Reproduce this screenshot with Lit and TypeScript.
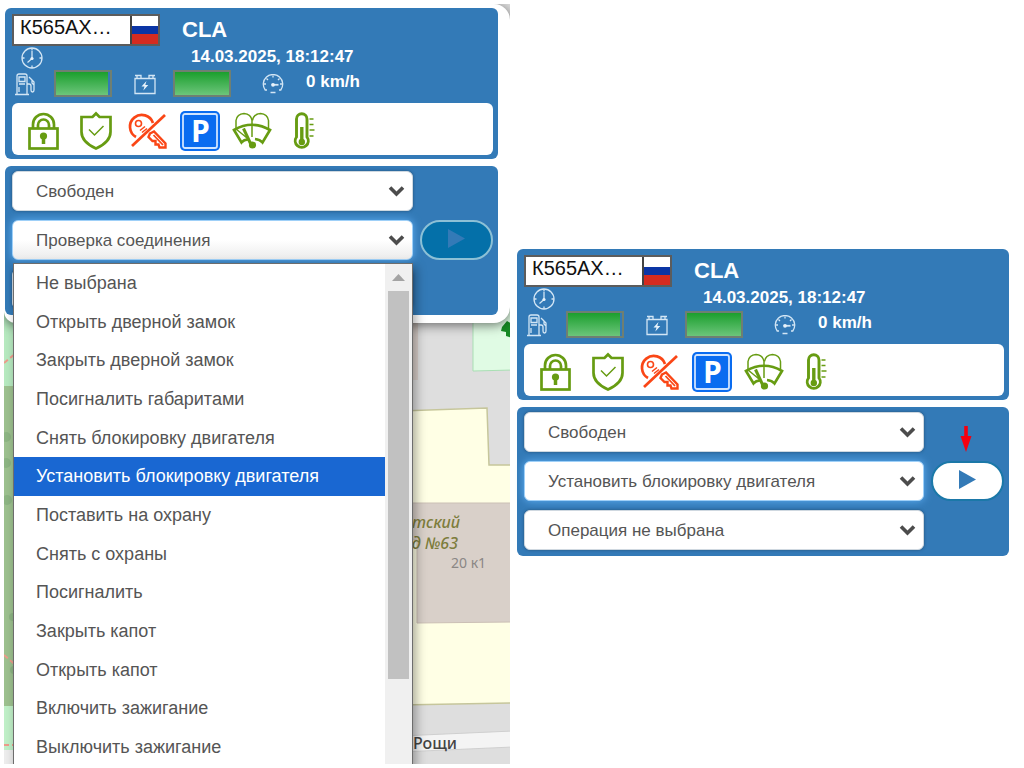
import { LitElement, html, css, svg } from "lit";
import { customElement, property } from "lit/decorators.js";
import { classMap } from "lit/directives/class-map.js";
import { styleMap } from "lit/directives/style-map.js";

const COMMANDS = [
  "Не выбрана",
  "Открыть дверной замок",
  "Закрыть дверной замок",
  "Посигналить габаритами",
  "Снять блокировку двигателя",
  "Установить блокировку двигателя",
  "Поставить на охрану",
  "Снять с охраны",
  "Посигналить",
  "Закрыть капот",
  "Открыть капот",
  "Включить зажигание",
  "Выключить зажигание",
];

const clockIcon = html`<svg class="thin" width="22" height="22" viewBox="0 0 22 22" aria-hidden="true">
  <circle cx="11" cy="11" r="10" />
  <path d="M11 4v7.5L6.5 15.5M11 1v2.5M11 18.500v2.500M1 11h2.500M18.500 11h2.500" />
  <circle class="dot" cx="11" cy="11.500" r="1.600" />
</svg>`;

const pumpIcon = html`<svg class="thin" width="26" height="24" viewBox="0 0 26 24" aria-hidden="true">
  <path d="M3 22.500h14M5 22.500V4q0-2 2-2h6q2 0 2 2v18.500M7 5h6v4.500H7zM7 12h6M7 15v5" />
  <path d="M17 5l3 3v3l2 2v5q0 2-1.500 2t-1.500-2v-4q0-2-2-2h-2M19 7l3 3v4" />
</svg>`;

const batteryIcon = html`<svg class="thin" width="24" height="24" viewBox="0 0 24 24" aria-hidden="true">
  <path d="M2 6.500h20v15H2zM4 6V3.500h4V6M16 6V3.500h4V6M2 3.500h2M20 3.500h2" />
  <path class="dot" d="M13.500 9l-5 5.500h3l-1.200 4 5-5.500h-3z" />
</svg>`;

const gaugeIcon = html`<svg class="thin" width="22" height="20" viewBox="0 0 22 20" aria-hidden="true">
  <path d="M5 16H3.200A9.700 9.700 0 1 1 18.800 16H17M8.500 18.500h5" />
  <path d="M2 10h2M4.500 4.500l1.500 1.500M11 1.500v2M17.500 4.500L16 6M20 10h-2" />
  <path d="M11 10.800h5.500" stroke-width="1.800" />
  <circle class="dot" cx="11" cy="10.800" r="1.900" />
</svg>`;

const lockIcon = svg`<g class="green">
  <rect x="5.500" y="17.500" width="28" height="20" />
  <path d="M9 17v-3.500a10.500 10.500 0 0 1 21 0V17M14 17v-3a5.500 5.500 0 0 1 11 0v3" />
  <circle class="fill" cx="19.500" cy="25" r="3.600" />
  <path d="M19.500 26v7" stroke-width="3.500" />
</g>`;

const shieldIcon = svg`<g class="green">
  <path d="M5.500 6h11l3.500-3.500L23.500 6h11v15q0 10-14.500 16.500Q5.500 31 5.500 21z" />
  <path d="M13 18.500l5.500 5.500 9-9" stroke-width="1.500" />
</g>`;

const keyIcon = svg`<g class="red">
  <path d="M8 26A11.800 11.800 0 1 1 25 12" />
  <circle cx="10.500" cy="12.500" r="3" stroke-width="1.600" />
  <path d="M12 19.500l5-4M14 21.500l5-4" stroke-width="1.600" />
  <path d="M4 35L37 4" />
  <path d="M22 22.500l4-2 11.500 12v4h-6l-1-3h-3v-3.500h-3l-4-4z" stroke-width="2.400" />
  <path d="M25.500 24l9.500 10" stroke-width="1.800" />
</g>`;

const parkingIcon = svg`<g>
  <rect x="0" y="0" width="40" height="40" rx="5" fill="#0a6cf0" />
  <rect x="3" y="3" width="34" height="34" rx="2" fill="none" stroke="#cfe4ff" stroke-width="1.800" />
  <text class="letter" x="20.500" y="31" text-anchor="middle">P</text>
</g>`;

const washerIcon = svg`<g class="green">
  <path d="M17.500 29L4 18v-8.500q1-6.500 8-7 7 .5 8 7V26M20.500 9.500q1-6.500 8-7 7 .5 8 7V17" stroke-width="1.500" />
  <path d="M16 28.500q-4 0-6.500 3L2 19Q20 8.500 38 19l-7.500 12.500q-2.500-3-7.500-3.500" />
  <path d="M11.500 17.500l7 15" stroke-width="3" />
  <circle class="fill" cx="20.500" cy="34" r="3.600" />
</g>`;

const thermoIcon = svg`<g class="green">
  <path d="M12.500 26V8a5 5 0 0 1 10.500 0v18a6.500 6.500 0 1 1-10.500 0z" stroke-width="2.900" />
  <path d="M17.800 16v14" stroke-width="3.400" />
  <circle class="fill" cx="17.800" cy="31" r="3.200" />
  <path d="M25.500 8h4M25.500 13.500h4M25.500 19h5M25.500 25h4" stroke-width="1.500" />
</g>`;

const STATES = [
  { label: "Замок закрыт", icon: lockIcon },
  { label: "Охрана", icon: shieldIcon },
  { label: "Зажигание выключено", icon: keyIcon },
  { label: "Парковка", icon: parkingIcon },
  { label: "Омыватель", icon: washerIcon },
  { label: "Температура", icon: thermoIcon },
];

@customElement("vehicle-card")
class VehicleCard extends LitElement {
  @property() plate = "";
  @property() model = "";
  @property() time = "";
  @property() speed = "";
  @property({ type: Number }) fuel = 100;
  @property({ type: Number }) charge = 100;

  static styles = css`
    :host {
      display: block;
      padding: 6px 5px 4px 7px;
      border-radius: 6px;
      background: #337ab7;
      color: #fff;
      font-family: "Liberation Sans", Arial, sans-serif;
    }
    .title {
      display: flex;
      align-items: center;
      gap: 22px;
      height: 32px;
    }
    .plate {
      display: flex;
      box-sizing: border-box;
      width: 148px;
      height: 32px;
      border: 2px solid #5c5c5c;
      background: #fff;
      color: #111;
      font-size: 20px;
      line-height: 23px;
    }
    .number {
      flex: 1;
      padding-left: 6px;
    }
    .flag {
      width: 26px;
      border-left: 2px solid #444;
      background: linear-gradient(#fff 0 36%, #0b35a5 36% 66%, #d52b20 66%);
    }
    h2 {
      margin: 0;
      font-size: 22px;
      line-height: 32px;
    }
    .when,
    .gauges {
      display: grid;
      align-items: center;
      font-size: 17px;
      line-height: 20px;
      font-weight: bold;
    }
    .when {
      grid-template-columns: 170px auto;
      height: 24px;
      padding-left: 9px;
    }
    .gauges {
      grid-template-columns: 42px 79px 40px 89px 44px auto;
      height: 27px;
    }
    .value {
      padding-bottom: 3px;
    }
    .bar {
      box-sizing: border-box;
      width: 58px;
      height: 27px;
      border: 2px solid #6f7f72;
    }
    .level {
      height: 100%;
      background: linear-gradient(#1b9f2d, #6cc57b);
    }
    .states {
      display: flex;
      gap: 12px;
      margin: 0;
      margin-top: 6px;
      padding: 8px 12px 4px;
      border-radius: 6px;
      background: #fff;
      list-style: none;
    }
    svg {
      display: block;
    }
    .thin {
      fill: none;
      stroke: #d3e6f5;
      stroke-width: 1.3;
    }
    .dot {
      fill: #e8f3fb;
      stroke: none;
    }
    .green {
      fill: none;
      stroke: #679c12;
      stroke-width: 2.7;
    }
    .green .fill {
      fill: #679c12;
      stroke: none;
    }
    .red {
      fill: none;
      stroke: #fa4616;
      stroke-width: 2.7;
    }
    .letter {
      fill: #fff;
      font: bold 30px "Open Sans", sans-serif;
    }
  `;

  render() {
    return html`
      <div class="title">
        <div class="plate"><span class="number">${this.plate}</span><span class="flag"></span></div>
        <h2>${this.model}</h2>
      </div>
      <div class="when">${clockIcon}<time class="value">${this.time}</time></div>
      <div class="gauges">
        ${pumpIcon}
        <div class="bar"><div class="level" style=${styleMap({ width: `${this.fuel}%` })}></div></div>
        ${batteryIcon}
        <div class="bar"><div class="level" style=${styleMap({ width: `${this.charge}%` })}></div></div>
        ${gaugeIcon}
        <span class="value">${this.speed}</span>
      </div>
      <ul class="states">
        ${STATES.map(
          (s) => html`<li>
            <svg width="40" height="40" viewBox="0 0 40 40" role="img" aria-label=${s.label}>${s.icon}</svg>
          </li>`
        )}
      </ul>
    `;
  }
}

@customElement("command-panel")
class CommandPanel extends LitElement {
  @property() command = "";
  @property({ type: Boolean }) open = false;
  @property({ type: Boolean }) ready = false;
  @property({ attribute: false }) highlighted = "";

  static styles = css`
    :host {
      display: block;
      padding: 5px 5px 6px 7px;
      border-radius: 6px;
      background: #337ab7;
      font-family: "Liberation Sans", Arial, sans-serif;
      font-size: 17px;
    }
    .rows {
      display: grid;
      grid-template-columns: 1fr 73px;
      grid-auto-rows: 40px;
      gap: 9px 7px;
    }
    .field {
      position: relative;
      grid-column: 1;
    }
    select {
      appearance: none;
      box-sizing: border-box;
      width: 100%;
      height: 100%;
      padding: 0 40px 0 23px;
      border: 1px solid #cfd8e0;
      border-radius: 6px;
      background: #fff;
      box-shadow: 0 0 3px rgba(20, 40, 60, 0.5);
      color: #555;
      font: inherit;
    }
    .focused select {
      border-color: #9fd0f8;
      box-shadow: 0 0 8px #5fb0f5;
    }
    .opened select {
      background: linear-gradient(#fff 50%, #ececec);
    }
    .chevron {
      position: absolute;
      right: 8px;
      top: 14px;
      fill: none;
      stroke: #4c4c4c;
      stroke-width: 3.6;
      pointer-events: none;
    }
    button {
      display: grid;
      place-items: center;
      padding: 0 0 4px;
      border: 2px solid #1b78a8;
      border-radius: 20px;
      background: #fff;
    }
    button:disabled {
      border: 2px solid #8cc0d6;
      background: #0470a9;
    }
    .play {
      display: block;
      fill: #337ab7;
    }
    .hint {
      align-self: end;
      justify-self: center;
      padding-right: 4px;
      fill: #f5000f;
    }
    .popup {
      position: absolute;
      z-index: 2;
      top: calc(100% + 3px);
      left: 1px;
      right: 0;
      display: grid;
      grid-template-columns: 1fr 27px;
      height: 503px;
      border: 1px solid #6d6d6d;
      background: #fff;
      box-shadow: 3px 4px 10px rgba(0, 0, 0, 0.35);
      font-size: 18px;
    }
    .options {
      display: grid;
      grid-auto-rows: 1fr;
      margin: 0;
      padding: 0;
      list-style: none;
    }
    .option {
      display: flex;
      align-items: center;
      padding-left: 22px;
      color: #555;
    }
    .current {
      background: #1967d2;
      color: #fff;
    }
    .track {
      display: grid;
      grid-template-rows: 27px 388px;
      justify-items: center;
      background: #f0f0f0;
    }
    .up {
      align-self: center;
      fill: #a3a3a3;
    }
    .thumb {
      width: 21px;
      background: #c1c1c1;
    }
  `;

  private field(label: string, value: string, focused = false) {
    return html`
      <div class=${classMap({ field: true, focused, opened: focused && this.open })}>
        <select aria-label=${label}>
          <option>${value}</option>
        </select>
        <svg class="chevron" width="17" height="13" viewBox="0 0 17 13" aria-hidden="true">
          <path d="M2 2.500l6.500 6.500L15 2.500" />
        </svg>
        ${focused && this.open ? this.popup() : null}
      </div>
    `;
  }

  private popup() {
    return html`
      <div class="popup">
        <ul class="options" role="listbox" aria-label="Команды">
          ${COMMANDS.map((c) => {
            const current = c === this.highlighted;
            return html`<li class=${classMap({ option: true, current })} role="option" aria-selected=${current}>${c}</li>`;
          })}
        </ul>
        <div class="track">
          <svg class="up" width="13" height="7" viewBox="0 0 13 7" aria-hidden="true"><path d="M0 7l6.500-7L13 7z" /></svg>
          <div class="thumb"></div>
        </div>
      </div>
    `;
  }

  render() {
    return html`
      <div class="rows">
        ${this.field("Статус", "Свободен")}
        ${this.ready
          ? html`<svg class="hint" width="12" height="26" viewBox="0 0 12 26" aria-hidden="true">
              <path d="M4.200 0h3.600v10H11.500L6 26 .5 10h3.700z" />
            </svg>`
          : html`<span></span>`}
        ${this.field("Команда", this.command, true)}
        <button type="button" aria-label="Выполнить" ?disabled=${!this.ready}>
          <svg class="play" width="17" height="19" viewBox="0 0 17 19"><path d="M0 0l17 9.500L0 19z" /></svg>
        </button>
        ${this.field("Операция", "Операция не выбрана")}
      </div>
    `;
  }
}

@customElement("app-root")
class AppRoot extends LitElement {
  static styles = css`
    :host {
      display: grid;
      grid-template-columns: 506fr 510fr;
      box-sizing: border-box;
      min-height: 100vh;
      padding: 4px;
      background: #fff;
    }
    .left {
      position: relative;
      overflow: hidden;
      height: calc(100vh - 8px);
    }
    .map {
      position: absolute;
      inset: 0;
      width: 100%;
      height: 100%;
    }
    .place {
      fill: #7d7d3c;
      font: italic 500 16px "Noto Sans", sans-serif;
    }
    .house {
      fill: #8b8785;
      font: 14px "Noto Sans", sans-serif;
    }
    .street {
      fill: #444;
      font: 500 16px "Noto Sans", sans-serif;
    }
    .stack {
      display: grid;
      gap: 7px;
    }
    .sheet {
      position: relative;
      padding: 4px 12px 8px 1px;
      border-radius: 0 16px 16px 12px;
      background: #fff;
      box-shadow: 0 2px 12px rgba(0, 0, 0, 0.55);
    }
    .right {
      padding: 245px 11px 0 7px;
      align-content: start;
    }
  `;

  private card() {
    return html`<vehicle-card
      plate="К565АХ…"
      model="CLA"
      time="14.03.2025, 18:12:47"
      speed="0 km/h"
      fuel="96"
      charge="100"
    ></vehicle-card>`;
  }

  render() {
    return html`
      <section class="left">
        <svg class="map" viewBox="4 4 506 760" preserveAspectRatio="xMinYMin slice">
          <rect x="4" y="4" width="506" height="760" fill="#dedede" />
          <rect x="4" y="300" width="60" height="86" fill="#b7eac0" />
          <rect x="4" y="386" width="60" height="320" fill="#9dc18f" />
          <rect x="4" y="706" width="60" height="44" fill="#c0f0c8" />
          <rect x="4" y="750" width="60" height="14" fill="#ededed" />
          <g fill="#8db583">
            <circle cx="6" cy="437" r="5" /><circle cx="6" cy="463" r="5" /><circle cx="7" cy="500" r="5" />
            <circle cx="13" cy="617" r="4" /><circle cx="14" cy="670" r="4" />
          </g>
          <path d="M4 363l12-10M4 655l14 12M4 745h12" stroke="#ee9c8c" stroke-width="2" stroke-dasharray="5 3" />
          <path d="M400 320h18v60h-18z" fill="#d9cfca" />
          <path d="M473 310h40v60l-40 1z" fill="#e0fbe4" stroke="#a9dfb4" />
          <path d="M502 327l5-6 5 3v14l-6-2v-4l-5-1z" fill="#178a25" />
          <path d="M400 411l87-3 2 57h24v238l-113 2z" fill="#ffffe5" stroke="#c6c69b" stroke-width="1.500" />
          <path d="M400 503h113v119l-96 1V540h-17z" fill="#d9d0c9" stroke="#cbbfb5" />
          <path d="M400 736l113-5v16l-113 5z" fill="#f4f4f4" stroke="#cfcfcf" />
          <text class="place" x="460" y="528" text-anchor="end">тский</text>
          <text class="place" x="458" y="549" text-anchor="end">д №63</text>
          <text class="house" x="451" y="568">20 к1</text>
          <text class="street" x="413" y="749">Рощи</text>
        </svg>
        <div class="sheet stack">
          ${this.card()}
          <command-panel
            command="Проверка соединения"
            open
            .highlighted=${"Установить блокировку двигателя"}
          ></command-panel>
        </div>
      </section>
      <section class="right stack">
        ${this.card()}
        <command-panel command="Установить блокировку двигателя" ready></command-panel>
      </section>
    `;
  }
}
